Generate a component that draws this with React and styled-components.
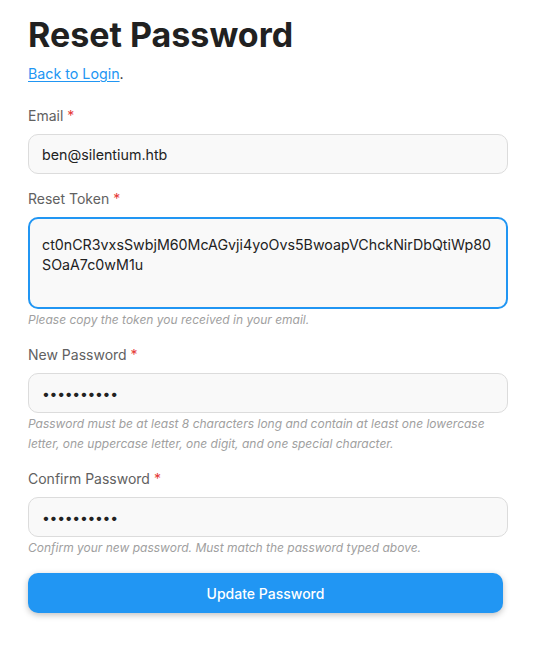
import React from 'react'
import styled, { createGlobalStyle } from 'styled-components'

const GlobalStyle = createGlobalStyle`
    html, body {
        margin: 0;
        padding: 0;
        background: #ffffff;
        font-family: Inter, "Noto Sans", sans-serif;
        color: #222222;
    }
`

const Page = styled.div`
    width: 480px;
    padding: 14px 0 30px 28px;
`

const Title = styled.h1`
    margin: 0;
    font-size: 34px;
    font-weight: 700;
    line-height: 42px;
    color: #212121;
`

const Back = styled.p`
    margin: 7px 0 21px;
    font-size: 14.25px;
    line-height: 22px;
    color: #222;

    a {
        color: #2196f3;
        text-decoration: underline;
        text-underline-offset: 2px;
    }
`

const Field = styled.div`
    display: flex;
    flex-direction: column;
    margin-bottom: 15px;
`

const Label = styled.label`
    font-size: 14px;
    line-height: 20px;
    color: #616161;
    margin-bottom: 8px;

    span {
        color: #e53935;
    }
`

const Input = styled.div`
    box-sizing: border-box;
    height: 40px;
    display: flex;
    align-items: center;
    padding: 0 13px;
    border: 1px solid #dcdcdc;
    border-radius: 10px;
    background: #f9f9f9;
    font-size: 14.25px;
    color: #222;
`

const Area = styled.div`
    box-sizing: border-box;
    height: 92px;
    padding: 16px 12px;
    border: 2px solid #2196f3;
    border-radius: 10px;
    background: #f9f9f9;
    font-size: 14.25px;
    line-height: 20px;
    color: #222;
    word-break: break-all;
`

const Help = styled.small`
    display: block;
    margin-top: 1px;
    font-size: 12px;
    line-height: 20px;
    font-style: italic;
    color: #a0a0a0;
`

const Dots = styled.span`
    font-size: 14px;
    letter-spacing: -0.3px;
`

const Submit = styled.button`
    width: 475px;
    height: 40px;
    border: none;
    border-radius: 10px;
    background: #2196f3;
    color: #ffffff;
    font-family: Inter, sans-serif;
    font-size: 14px;
    font-weight: 500;
    box-shadow: 0 2px 6px rgba(0, 0, 0, 0.25);
`

export default function App() {
    return (
        <Page>
            <GlobalStyle />
            <Title>Reset Password</Title>
            <Back><a href="#">Back to Login</a>.</Back>

            <Field>
                <Label>Email <span>*</span></Label>
                <Input>ben@silentium.htb</Input>
            </Field>

            <Field>
                <Label>Reset Token <span>*</span></Label>
                <Area>ct0nCR3vxsSwbjM60McAGvji4yoOvs5BwoapVChckNirDbQtiWp80SOaA7c0wM1u</Area>
                <Help>Please copy the token you received in your email.</Help>
            </Field>

            <Field>
                <Label>New Password <span>*</span></Label>
                <Input><Dots>••••••••••</Dots></Input>
                <Help>Password must be at least 8 characters long and contain at least one lowercase letter, one uppercase letter, one digit, and one special character.</Help>
            </Field>

            <Field>
                <Label>Confirm Password <span>*</span></Label>
                <Input><Dots>••••••••••</Dots></Input>
                <Help>Confirm your new password. Must match the password typed above.</Help>
            </Field>

            <Submit>Update Password</Submit>
        </Page>
    )
}
